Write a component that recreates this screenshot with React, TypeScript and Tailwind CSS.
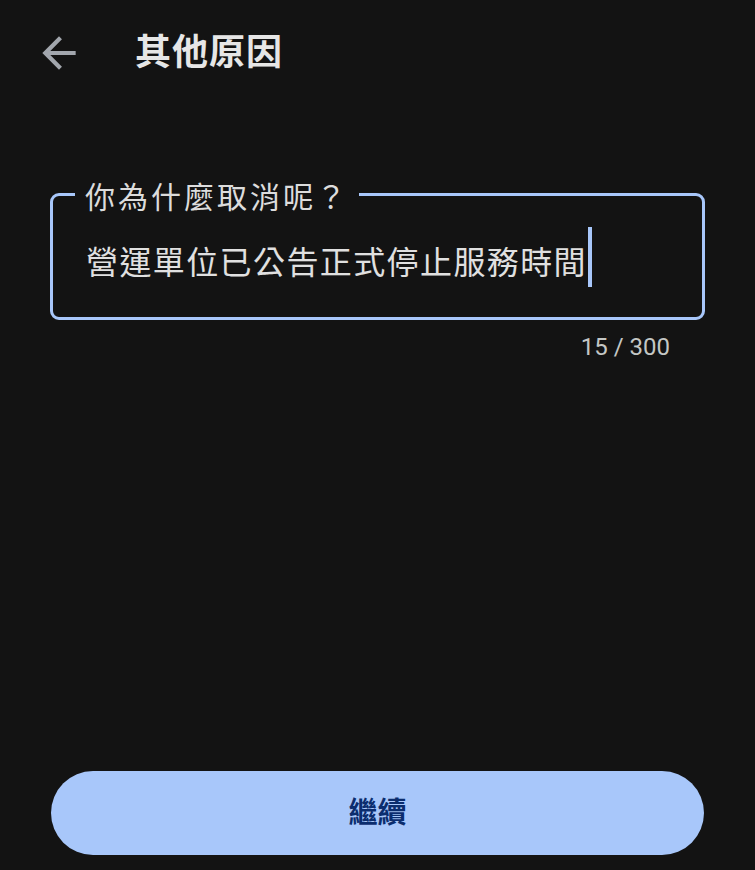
import React from "react";

const CJK = "font-['Roboto','Noto_Sans_CJK_TC',sans-serif]";

function BackArrow() {
  return (
    <svg viewBox="0 0 24 24" className="w-[50px] h-[50px]" fill="#a2a6ad">
      <path d="M20 11H7.83l5.59-5.59L12 4l-8 8 8 8 1.41-1.41L7.83 13H20v-2z" />
    </svg>
  );
}

export default function App() {
  const reason = "營運單位已公告正式停止服務時間";

  return (
    <div className={`w-[755px] h-[870px] bg-[#131313] flex flex-col ${CJK}`}>
      {/* Header */}
      <div className="h-[106px] flex items-center pl-[34px]">
        <button className="flex items-center justify-center">
          <BackArrow />
        </button>
        <h1 className="ml-[51px] text-[36px] font-bold text-[#e6e6e6] leading-none tracking-[1px]">
          其他原因
        </h1>
      </div>

      {/* Text field */}
      <div className="px-[50px] mt-[87px]">
        <div className="relative h-[127px] border-[3px] border-[#a8c7fa] rounded-[9px] flex items-center pl-[33px] pt-[12px]">
          <span className="absolute left-[22px] top-[-16px] px-[10px] bg-[#131313] text-[30px] leading-[36px] text-[#dcdcdc] tracking-[3px]">
            你為什麼取消呢？
          </span>
          <div className="flex items-center">
            <span className="text-[32px] leading-[40px] text-[#e0e0e0] tracking-[1.4px]">{reason}</span>
            <span className="inline-block w-[4px] h-[60px] bg-[#a8c7fa] ml-[1px] -mt-[12px]" />
          </div>
        </div>
        <div className="flex justify-end pr-[35px] mt-[13px]">
          <span className="text-[24px] leading-[28px] text-[#c4c7c5]">
            {reason.length} / 300
          </span>
        </div>
      </div>

      {/* Continue button */}
      <div className="mt-auto px-[51px] pb-[15px]">
        <button className="w-full h-[84px] rounded-full bg-[#a8c7fa] flex items-center justify-center">
          <span className="text-[29px] font-bold text-[#0b2d6e] leading-none">繼續</span>
        </button>
      </div>
    </div>
  );
}
